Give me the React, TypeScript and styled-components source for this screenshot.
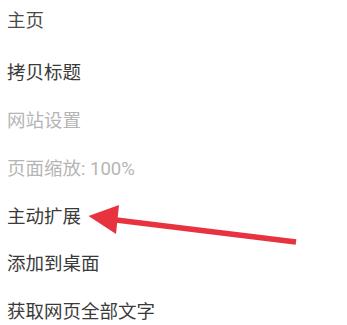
import React from 'react';
import styled, { createGlobalStyle } from 'styled-components';

const GlobalStyle = createGlobalStyle`
  html, body {
    margin: 0;
    padding: 0;
    background: #ffffff;
  }
  body {
    font-family: Roboto, "Noto Sans CJK SC", sans-serif;
  }
`;

const Screen = styled.div`
  position: relative;
  width: 347px;
  height: 325px;
  overflow: hidden;
  background: #ffffff;
`;

const Header = styled.div`
  display: flex;
  align-items: center;
  height: 37px;
  padding-left: 7px;
  font-size: 18.5px;
  color: #4a4a4a;
`;

const Menu = styled.ul`
  list-style: none;
  margin: 10.6px 0 0;
  padding: 0;
`;

const Item = styled.li<{ $disabled?: boolean }>`
  display: flex;
  align-items: center;
  height: 47.7px;
  padding-left: 7px;
  font-size: 18.5px;
  color: ${(p) => (p.$disabled ? '#b5b5b5' : '#3a3a3a')};
`;

const Annotation = styled.svg`
  position: absolute;
  left: 0;
  top: 0;
  pointer-events: none;
`;

const items: { label: string; disabled?: boolean }[] = [
  { label: '拷贝标题' },
  { label: '网站设置', disabled: true },
  { label: '页面缩放: 100%', disabled: true },
  { label: '主动扩展' },
  { label: '添加到桌面' },
  { label: '获取网页全部文字' },
];

const App: React.FC = () => {
  return (
    <Screen>
      <GlobalStyle />
      <Header>主页</Header>
      <Menu>
        {items.map((it) => (
          <Item key={it.label} $disabled={it.disabled}>
            {it.label}
          </Item>
        ))}
      </Menu>
      <Annotation width="347" height="325" viewBox="0 0 347 325">
        <line x1="112" y1="219.5" x2="296" y2="242" stroke="#e6333f" strokeWidth="5.5" />
        <polygon points="88.5,216 119,205 116,234" fill="#e6333f" />
      </Annotation>
    </Screen>
  );
};

export default App;
